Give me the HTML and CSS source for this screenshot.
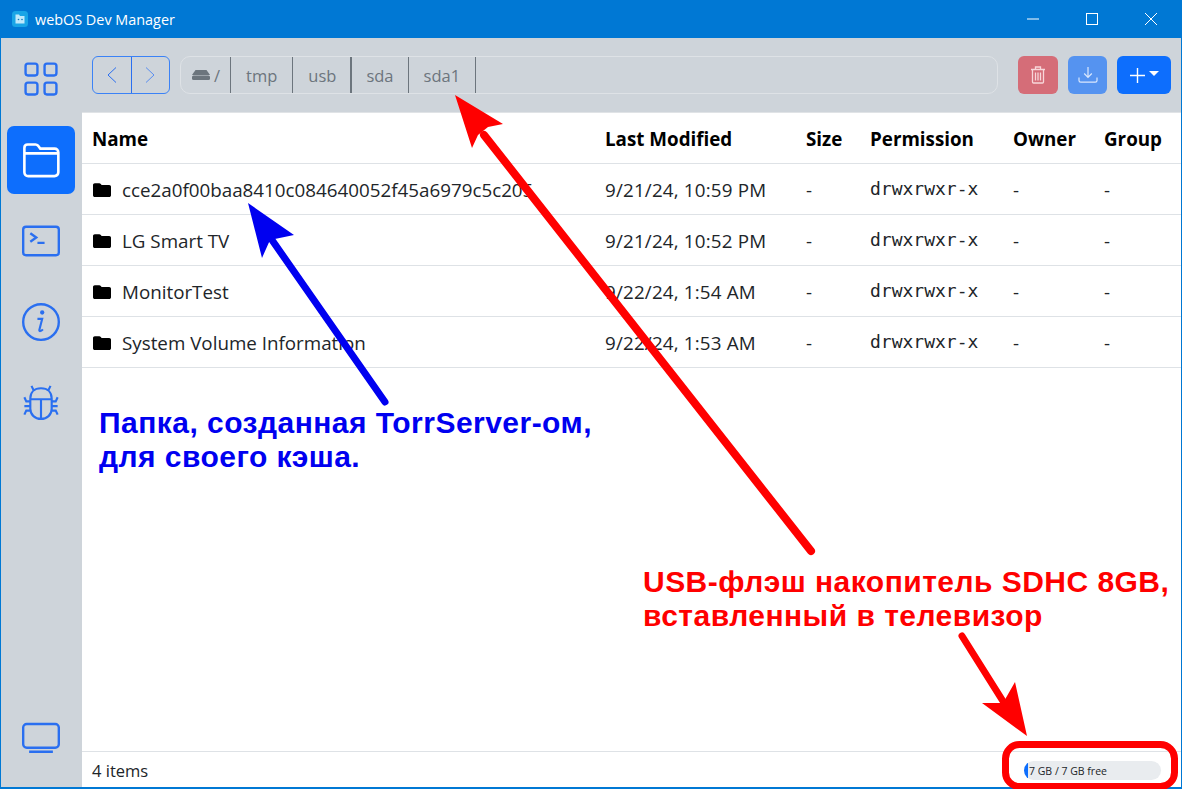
FILE: index.html
```html
<!DOCTYPE html>
<html lang="en">
<head>
<meta charset="utf-8">
<title>webOS Dev Manager</title>
<link rel="stylesheet" href="styles.css">
</head>
<body>
<div class="window">
  <header class="titlebar">
    <svg class="app-icon" viewBox="0 0 16 16"><rect width="16" height="16" rx="3.5" fill="#19a5e6"/><path d="M3.500 3.500h3.500l1 1.500h4.500v7.500h-9z" fill="#bfe9fb"/><circle cx="6.500" cy="8.500" r=".8" fill="#1679b8"/><circle cx="10" cy="8.500" r=".8" fill="#1679b8"/></svg>
    <span class="app-title">webOS Dev Manager</span>
    <div class="win-controls">
      <span class="win-btn"><svg width="12" height="12" viewBox="0 0 12 12"><path d="M0 6h12" stroke="#fff"/></svg></span>
      <span class="win-btn"><svg width="12" height="12" viewBox="0 0 12 12"><rect x=".5" y=".5" width="11" height="11" fill="none" stroke="#fff"/></svg></span>
      <span class="win-btn"><svg width="12" height="12" viewBox="0 0 12 12"><path d="M0 0l12 12M12 0L0 12" stroke="#fff"/></svg></span>
    </div>
  </header>
  <div class="body">
    <nav class="sidebar">
      <a class="nav-item"><svg viewBox="0 0 16 16" class="nav-icon"><path fill="currentColor" d="M1 2.500A1.500 1.500 0 0 1 2.500 1h3A1.500 1.500 0 0 1 7 2.500v3A1.500 1.500 0 0 1 5.500 7h-3A1.500 1.500 0 0 1 1 5.500zM2.500 2a.5.500 0 0 0-.5.500v3a.5.500 0 0 0 .5.500h3a.5.500 0 0 0 .5-.500v-3a.5.500 0 0 0-.5-.500zm6.500.500A1.500 1.500 0 0 1 10.500 1h3A1.500 1.500 0 0 1 15 2.500v3A1.500 1.500 0 0 1 13.500 7h-3A1.500 1.500 0 0 1 9 5.500zm1.500-.500a.5.500 0 0 0-.5.500v3a.5.500 0 0 0 .5.500h3a.5.500 0 0 0 .5-.500v-3a.5.500 0 0 0-.5-.500zM1 10.500A1.500 1.500 0 0 1 2.500 9h3A1.500 1.500 0 0 1 7 10.500v3A1.500 1.500 0 0 1 5.500 15h-3A1.500 1.500 0 0 1 1 13.500zm1.500-.500a.5.500 0 0 0-.5.500v3a.5.500 0 0 0 .5.500h3a.5.500 0 0 0 .5-.500v-3a.5.500 0 0 0-.5-.500zm6.500.500A1.500 1.500 0 0 1 10.500 9h3a1.500 1.500 0 0 1 1.500 1.500v3a1.500 1.500 0 0 1-1.500 1.500h-3A1.500 1.500 0 0 1 9 13.500zm1.500-.500a.5.500 0 0 0-.5.500v3a.5.500 0 0 0 .5.500h3a.5.500 0 0 0 .5-.500v-3a.5.500 0 0 0-.5-.500z"/></svg></a>
      <a class="nav-item active"><svg viewBox="0 0 16 16" class="nav-icon"><path fill="none" stroke="currentColor" stroke-width="1.100" d="M1 13.200V2.900c0-.8.600-1.400 1.400-1.400h3.300c.4 0 .8.200 1.100.5l.9 1.200h6c.9 0 1.600.7 1.600 1.600v8.400c0 .9-.7 1.600-1.600 1.600H2.600c-.9 0-1.600-.7-1.600-1.600zM1.200 5.200h13.600"/></svg></a>
      <a class="nav-item"><svg viewBox="0 0 16 16" class="nav-icon"><rect x=".5" y="2" width="15" height="12" rx="1.200" fill="none" stroke="currentColor"/><path d="M3.500 4.700L6 6.500 3.500 8.300M6.500 8.800h3" fill="none" stroke="currentColor"/></svg></a>
      <a class="nav-item"><svg viewBox="0 0 16 16" class="nav-icon"><circle cx="8" cy="8" r="7.500" fill="none" stroke="currentColor"/><circle cx="8.500" cy="4" r=".9" fill="currentColor"/><path d="M6.500 6.700h2l-1.200 4.700c-.1.500.6.700 1.500-.3" fill="none" stroke="currentColor" stroke-width=".9"/></svg></a>
      <a class="nav-item"><svg viewBox="0 0 16 16" class="nav-icon"><path d="M8 1.800c-2.900 0-4.500 1.800-4.500 4.300v4.300c0 2.600 2 4.300 4.500 4.300s4.500-1.700 4.500-4.300V6.100c0-2.500-1.600-4.300-4.500-4.300zM3.500 6.400h9M8 6.400v8.300M4.900 2.700L4 .8M11.100 2.700L12 .8M3.500 7.300H1.800L1 5.600M12.500 7.300h1.700l.8-1.700M3.500 9.300H1M12.500 9.300H15M3.500 11.200H1.800L1 12.900M12.500 11.200h1.700l.8 1.700" fill="none" stroke="currentColor" stroke-width=".9"/></svg></a>
      <a class="nav-item tv"><svg viewBox="0 0 16 16" class="nav-icon"><path fill="none" stroke="currentColor" d="M2 2.500h12c.8 0 1.500.7 1.500 1.500v7c0 .8-.7 1.500-1.500 1.500H2c-.8 0-1.500-.7-1.500-1.500V4c0-.8.700-1.500 1.500-1.500zM3 14.200h10"/></svg></a>
    </nav>
    <main class="content">
      <div class="toolbar">
        <div class="nav-group">
          <button class="arrow"><svg width="20" height="20" viewBox="0 0 20 20"><path d="M14 2.500L6 10l8 7.500" fill="none" stroke="currentColor"/></svg></button>
          <button class="arrow dim"><svg width="20" height="20" viewBox="0 0 20 20"><path d="M6 2.500l8 7.500-8 7.500" fill="none" stroke="currentColor"/></svg></button>
        </div>
        <div class="crumbs">
          <span class="crumb root"><svg width="18" height="12" viewBox="0 0 18 12"><path d="M3.500 1h11L18 6H0z" fill="#6c757d"/><rect y="6.500" width="18" height="4.500" rx="1.500" fill="#6c757d"/></svg> /</span>
          <span class="crumb">tmp</span>
          <span class="crumb thick">usb</span>
          <span class="crumb tight">sda</span>
          <span class="crumb">sda1</span>
        </div>
        <button class="tool danger"><svg width="16" height="18" viewBox="0 0 16 18"><path fill="none" stroke="#f8d7da" stroke-width="1.300" d="M1 3.500h14M5.500 3V1h5V3M2.500 4v12c0 .6.400 1 1 1h9c.6 0 1-.4 1-1V4M5.500 6.500v8M8 6.500v8M10.500 6.500v8"/></svg></button>
        <button class="tool primary-dim"><svg width="20" height="18" viewBox="0 0 20 18"><path fill="none" stroke="#dbe8fd" stroke-width="1.200" d="M10 1v10M6.200 7.500L10 11.300l3.800-3.800M1 11.500v3c0 1 .7 1.700 1.700 1.700h14.600c1 0 1.700-.7 1.700-1.700v-3"/></svg></button>
        <button class="tool primary"><svg width="15" height="15" viewBox="0 0 15 15"><path d="M7.500 0v15M0 7.500h15" stroke="#fff" stroke-width="1.400"/></svg><span class="caret"></span></button>
      </div>
      <div class="grid">
        <div class="row head">
          <div class="c-name">Name</div><div class="c-date">Last Modified</div><div class="c-size">Size</div><div class="c-perm">Permission</div><div class="c-owner">Owner</div><div class="c-group">Group</div>
        </div>
        <div class="row">
          <div class="c-name"><svg class="folder" viewBox="0 0 20 16"><path d="M1 3c0-1 .8-1.800 1.800-1.800h4.400c.7 0 1.200.3 1.600.8l.8 1h7.600c1 0 1.800.8 1.800 1.800v8.400c0 1-.8 1.800-1.800 1.800H2.800c-1 0-1.800-.8-1.800-1.800z"/></svg><span class="fname">cce2a0f00baa8410c084640052f45a6979c5c205</span></div><div class="c-date">9/21/24, 10:59 PM</div><div class="c-size">-</div><div class="c-perm mono">drwxrwxr-x</div><div class="c-owner">-</div><div class="c-group">-</div>
        </div>
        <div class="row">
          <div class="c-name"><svg class="folder" viewBox="0 0 20 16"><path d="M1 3c0-1 .8-1.800 1.800-1.800h4.400c.7 0 1.200.3 1.600.8l.8 1h7.600c1 0 1.800.8 1.800 1.800v8.400c0 1-.8 1.800-1.800 1.800H2.800c-1 0-1.800-.8-1.800-1.800z"/></svg><span class="fname">LG Smart TV</span></div><div class="c-date">9/21/24, 10:52 PM</div><div class="c-size">-</div><div class="c-perm mono">drwxrwxr-x</div><div class="c-owner">-</div><div class="c-group">-</div>
        </div>
        <div class="row">
          <div class="c-name"><svg class="folder" viewBox="0 0 20 16"><path d="M1 3c0-1 .8-1.800 1.800-1.800h4.400c.7 0 1.200.3 1.600.8l.8 1h7.600c1 0 1.800.8 1.800 1.800v8.400c0 1-.8 1.800-1.800 1.800H2.800c-1 0-1.800-.8-1.800-1.800z"/></svg><span class="fname">MonitorTest</span></div><div class="c-date">9/22/24, 1:54 AM</div><div class="c-size">-</div><div class="c-perm mono">drwxrwxr-x</div><div class="c-owner">-</div><div class="c-group">-</div>
        </div>
        <div class="row">
          <div class="c-name"><svg class="folder" viewBox="0 0 20 16"><path d="M1 3c0-1 .8-1.800 1.800-1.800h4.400c.7 0 1.200.3 1.600.8l.8 1h7.600c1 0 1.800.8 1.800 1.800v8.400c0 1-.8 1.800-1.800 1.800H2.800c-1 0-1.800-.8-1.800-1.800z"/></svg><span class="fname">System Volume Information</span></div><div class="c-date">9/22/24, 1:53 AM</div><div class="c-size">-</div><div class="c-perm mono">drwxrwxr-x</div><div class="c-owner">-</div><div class="c-group">-</div>
        </div>
      </div>
      <footer class="status">
        <span class="count">4 items</span>
        <div class="storage"><span class="storage-fill" style="width:3%"></span><span class="storage-text">7 GB / 7 GB free</span></div>
      </footer>
    </main>
  </div>
  <svg class="overlay" width="1182" height="789" viewBox="0 0 1182 789">
    <path class="shaft red-line wide" d="M811 551L484 135"/>
    <path class="head red-fill" d="M455 95L503 124 488 127 478 135 472 148z"/>
    <path class="shaft red-line" d="M962 636L1006 706"/>
    <path class="head red-fill" d="M1027 736L982 703 1003 703 1015 682z"/>
    <path class="shaft blue-line" d="M385 402L272 240"/>
    <path class="head blue-fill" d="M248 203L294 235 270 240 262 258z"/>
    <rect class="frame" x="1005.500" y="744.500" width="169" height="42" rx="14"/>
  </svg>
  <div class="note blue">Папка, созданная TorrServer-ом,<br>для своего кэша.</div>
  <div class="note red">USB-флэш накопитель SDHC 8GB,<br>вставленный в телевизор</div>
</div>
</body>
</html>
```
FILE: styles.css
```css
* { box-sizing: border-box; }
html, body { margin: 0; padding: 0; width: 100%; height: 100%; overflow: hidden; background: #fff; }
body { font-family: "Open Sans", "Noto Sans", sans-serif; color: #212529; }
.window { position: relative; width: 1182px; height: 789px; display: flex; flex-direction: column; border: 1px solid #0078d4; border-top: 0; border-bottom-width: 2px; }
.titlebar { height: 38px; flex: none; background: #0078d4; color: #fff; display: flex; align-items: center; padding-left: 11px; }
.app-icon { width: 16px; height: 16px; margin-right: 7px; }
.app-title { font: 14.400px "Open Sans", sans-serif; }
.win-controls { margin-left: auto; display: flex; padding-right: 1px; }
.win-btn { width: 59px; height: 38px; display: flex; align-items: center; justify-content: center; }
.body { flex: 1; display: flex; min-height: 0; }
.sidebar { width: 81px; flex: none; background: #ced4da; display: flex; flex-direction: column; align-items: center; padding: 7px 1px 0 0; }
.nav-item { width: 68px; height: 68px; border-radius: 7px; color: #2a6ff0; display: flex; align-items: center; justify-content: center; margin-bottom: 13px; }
.nav-item.active { background: #0d6efd; color: #fff; }
.nav-item.tv { margin-top: auto; margin-bottom: 19px; height: 62px; }
.nav-icon { width: 38px; height: 38px; }
.content { flex: 1; display: flex; flex-direction: column; min-width: 0; }
.toolbar { height: 75px; flex: none; background: #ced4da; display: flex; align-items: center; padding: 0 10px; border-bottom: 1px solid #e0e3e6; }
.nav-group { display: flex; border: 1px solid #3b82f6; border-radius: 6px; height: 38px; margin-right: 10px; width: 78px; }
.arrow { flex: 1; border: 0; background: none; padding: 0; color: #2a6ff0; display: flex; align-items: center; justify-content: center; }
.arrow:first-child { border-right: 1px solid #2a6ff0; }
.arrow.dim { color: #5a8ef0; }
.crumbs { flex: 1; height: 38px; border: 1px solid #dee2e6; border-radius: 10px; display: flex; align-items: stretch; color: #6c757d; font-size: 16.500px; margin-right: 20px; }
.crumb { display: flex; align-items: center; padding: 0 15px; border-right: 1.500px solid #6c757d; }
.crumb.root { padding: 0 10px 0 11px; gap: 4px; }
.crumb.thick { padding-right: 14px; border-right-width: 2px; }
.crumb.tight { padding: 0 14px; }
.tool { height: 38px; border: 0; border-radius: 6px; margin-left: 10px; display: flex; align-items: center; justify-content: center; padding: 0; }
.tool:first-of-type { margin-left: 0; }
.danger { width: 40px; background: #d56d78; }
.primary-dim { width: 39px; background: #5593f0; }
.primary { width: 54px; background: #0d6efd; gap: 4px; }
.caret { width: 0; height: 0; border-left: 5px solid transparent; border-right: 5px solid transparent; border-top: 5px solid #fff; margin-bottom: 3px; }
.grid { flex: 1; min-height: 0; }
.row { display: grid; grid-template-columns: 513px 201px 64px 143px 91px 1fr; height: 51px; align-items: center; border-bottom: 1px solid #dee2e6; font-size: 18.800px; padding: 2px 0 0 10px; }
.row.head { font-weight: 700; color: #000; }
.row:not(.head) .c-date { letter-spacing: .18px; }
.c-name { display: flex; align-items: center; white-space: nowrap; }
.folder { width: 20px; height: 16px; flex: none; margin-right: 10px; fill: #000; }
.mono { font-family: "DejaVu Sans Mono", monospace; font-size: 18px; margin-bottom: 4px; }
.status { height: 36px; flex: none; border-top: 1px solid #dee2e6; display: flex; align-items: center; justify-content: space-between; padding: 2px 20px 0 10px; font-size: 16.500px; }
.storage { position: relative; width: 137px; height: 19px; background: #e9ecef; border-radius: 10px; overflow: hidden; display: flex; align-items: center; }
.storage-fill { position: absolute; left: 0; top: 0; bottom: 0; background: #0d6efd; }
.storage-text { position: relative; font-size: 10.500px; padding-left: 5px; }
.overlay { position: absolute; left: -1px; top: 0; pointer-events: none; }
.shaft { fill: none; stroke-width: 7px; stroke-linecap: round; }
.shaft.wide { stroke-width: 8px; }
.red-line { stroke: #f00; }
.blue-line { stroke: #0000f0; }
.red-fill { fill: #f00; }
.blue-fill { fill: #0000f0; }
.frame { fill: none; stroke: #f00; stroke-width: 7px; }
.note { position: absolute; font: 700 30px/34px "Liberation Sans", Arial, sans-serif; letter-spacing: .47px; white-space: nowrap; }
.note.blue { color: #0000f0; left: 98px; top: 406px; }
.note.red { color: #f00; left: 642px; top: 565px; }
```
